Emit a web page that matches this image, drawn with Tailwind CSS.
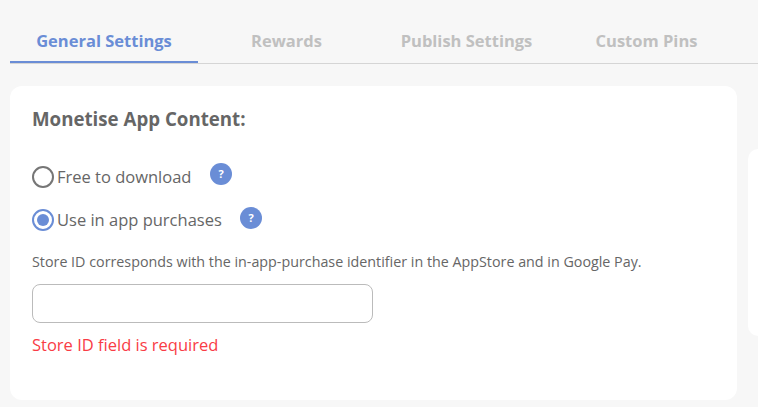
<!DOCTYPE html>
<html lang="en">
<head>
  <meta charset="UTF-8">
  <meta name="viewport" content="width=device-width, initial-scale=1.0">
  <title>General Settings</title>
  <script src="https://cdn.jsdelivr.net/npm/@tailwindcss/browser@4"></script>
</head>
<body class="h-[407px] overflow-hidden bg-[#f7f7f7] font-['Open_Sans',sans-serif] text-[#666]">
  <nav class="ml-[10px] mt-[18px] flex h-[46px] border-b border-[#d5d5d5] text-[16.5px] font-bold leading-[46px] text-[#c0c0c0]">
    <a class="h-[45px] w-[188px] border-b-2 border-[#6a8dd6] text-center text-[#6a8dd6]">General Settings</a>
    <a class="w-[177px] text-center">Rewards</a>
    <a class="w-[183px] text-center">Publish Settings</a>
    <a class="w-[177px] text-center">Custom Pins</a>
  </nav>

  <main class="ml-[10px] mt-[22px] flex items-start gap-[11px]">
    <section class="h-[314px] w-[727px] shrink-0 rounded-[12px] bg-white px-[22px] pt-[19px]">
      <h2 class="text-[18.7px] font-bold leading-[28px]">Monetise App Content:</h2>

      <div class="mt-[30px] flex h-[28px] items-center">
        <span class="size-[22px] rounded-full border-2 border-[#767676]"></span>
        <span class="ml-[3px] w-[135px] whitespace-nowrap text-[16.5px]">Free to download</span>
        <span class="mb-[6px] ml-[18px] flex size-[22px] items-center justify-center rounded-full bg-[#6a8dd6] pt-px text-[11px] font-bold text-white">?</span>
      </div>

      <div class="mt-[15px] flex h-[28px] items-center">
        <span class="flex size-[22px] items-center justify-center rounded-full border-2 border-[#6a8dd6]"><span class="size-[12px] rounded-full bg-[#6a8dd6]"></span></span>
        <span class="ml-[3px] w-[165px] whitespace-nowrap text-[16.5px]">Use in app purchases</span>
        <span class="mb-[4px] ml-[18px] flex size-[22px] items-center justify-center rounded-full bg-[#6a8dd6] pt-px text-[11px] font-bold text-white">?</span>
      </div>

      <p class="mt-[18px] text-[14.3px] leading-[20px]">Store ID corresponds with the in-app-purchase identifier in the AppStore and in Google Pay.</p>
      <input type="text" class="mt-[12px] block h-[39px] w-[341px] rounded-[8px] border border-[#bbb] bg-white px-3 outline-none">
      <p class="mt-[10px] text-[16.5px] leading-[24px] text-[#f93c45]">Store ID field is required</p>
    </section>

    <aside class="mt-[63px] h-[187px] flex-1 rounded-l-[12px] bg-white"></aside>
  </main>
</body>
</html>
